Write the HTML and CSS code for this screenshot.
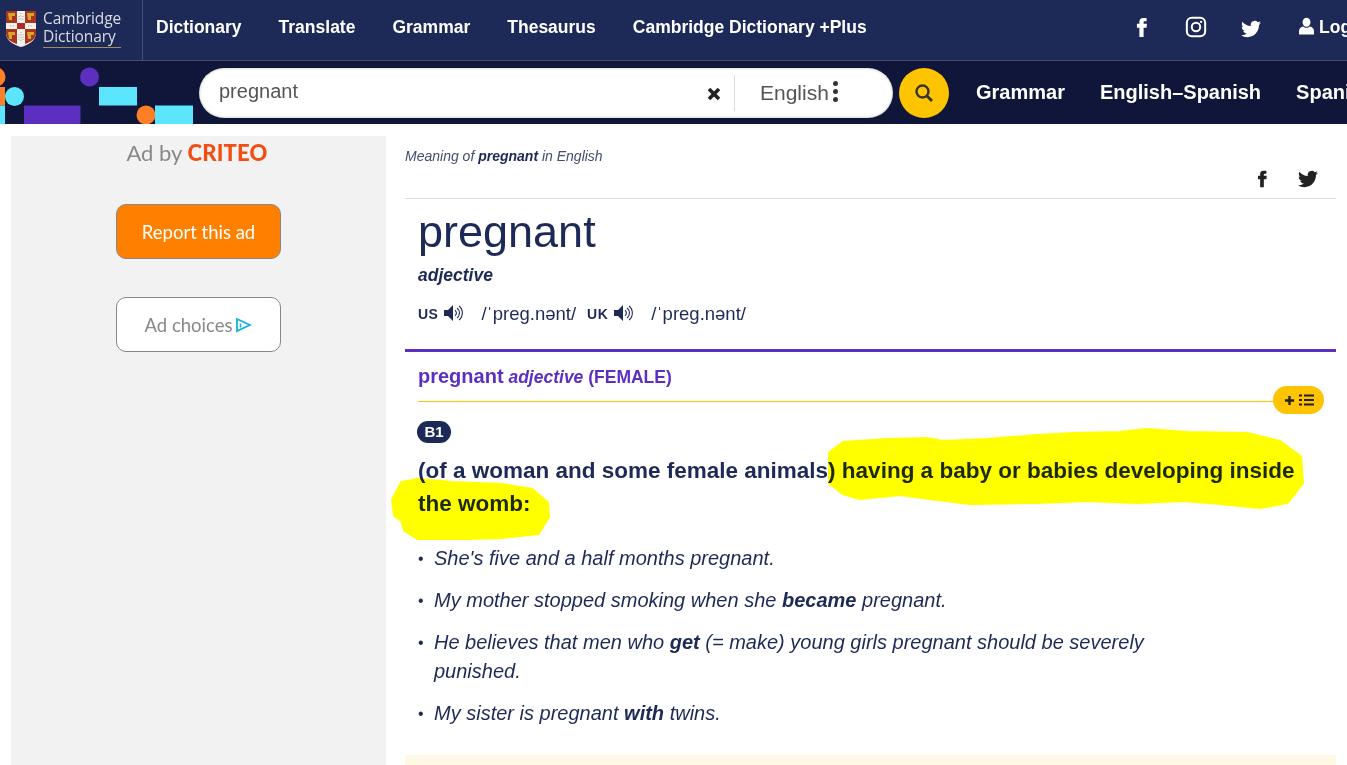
FILE: index.html
```html
<!DOCTYPE html>
<html lang="en">
<head>
<meta charset="utf-8">
<title>pregnant | Cambridge Dictionary</title>
<link rel="stylesheet" href="styles.css">
</head>
<body>
<svg class="defs" width="0" height="0" aria-hidden="true">
  <symbol id="i-fb" viewBox="0 0 24 24"><path d="M14.2 8.2h3.5l-.45 4h-3.05V22H9.8v-9.8H7.2v-4h2.6V5.8C9.8 3.2 11.3 2 13.7 2h3.6v3.6h-2.1c-.75 0-1 .35-1 1z"/></symbol>
  <symbol id="i-tw" viewBox="0 0 24 24"><path d="M23.95 4.57a10 10 0 0 1-2.82.78 4.96 4.96 0 0 0 2.16-2.73c-.95.56-2 .96-3.13 1.19a4.92 4.92 0 0 0-8.38 4.48C7.69 8.1 4.07 6.13 1.64 3.16a4.82 4.82 0 0 0-.67 2.48c0 1.7.87 3.21 2.19 4.09a4.9 4.9 0 0 1-2.23-.61v.06a4.92 4.92 0 0 0 3.95 4.82 5 5 0 0 1-2.21.09 4.94 4.94 0 0 0 4.6 3.42 9.87 9.87 0 0 1-6.1 2.1c-.39 0-.78-.02-1.17-.06a14 14 0 0 0 7.56 2.2c9.05 0 14-7.49 14-13.98 0-.21 0-.42-.02-.63A9.94 9.94 0 0 0 24 4.59z"/></symbol>
  <symbol id="i-spk" viewBox="0 0 20 18"><path d="M0 6h4l5-5v16l-5-5H0z" fill="currentColor"/><path d="M11 6.2a3.5 3.5 0 0 1 0 5.6M13 4a6.3 6.3 0 0 1 0 10M15 2a9 9 0 0 1 0 14" fill="none" stroke="currentColor" stroke-width="1.1"/></symbol>
</svg>

<header class="top">
  <a class="brand">
    <svg class="shield" viewBox="0 0 32 38">
      <path d="M1 1h30v22c0 8-8 12-15 14C9 35 1 31 1 23z" fill="#f3f1ec"/>
      <path d="M1 1h11v12H1zM20 1h11v12H20zM1 19h11v15C6 32 1 29 1 23zM20 19h11v4c0 6-5 9-11 11z" fill="#a8361f"/>
      <path d="M3 3h7v3H7v4H4zM22 3h7v3h-3v4h-3zM3 22h7v3H7v4H4zM22 22h7v3h-3v4h-3z" fill="#d7a52f"/>
      <path d="M12 13h8v6h-8z" fill="#b02a22"/>
      <path d="M16 3v8M14 6v5M18 6v5M5 16h4M23 16h4M16 22v10M14 24v6M18 24v6" stroke="#8a8a8a" stroke-width=".8" stroke-dasharray="1 1.6"/>
    </svg>
    <span class="brand-name">Cambridge<br>Dictionary</span>
  </a>
  <nav class="top-nav">
    <a>Dictionary</a><a>Translate</a><a>Grammar</a><a>Thesaurus</a><a>Cambridge Dictionary +Plus</a>
  </nav>
  <div class="top-tools">
    <svg class="ti ti-f"><use href="#i-fb"/></svg>
    <svg class="ti ti-ig" viewBox="0 0 24 24"><rect x="2" y="2" width="20" height="20" rx="5.5" fill="none" stroke="#fff" stroke-width="2.2"/><circle cx="12" cy="12" r="4.6" fill="none" stroke="#fff" stroke-width="2.2"/><circle cx="17.6" cy="6.4" r="1.3" fill="#fff"/></svg>
    <svg class="ti ti-t"><use href="#i-tw"/></svg>
    <svg class="ti ti-u" viewBox="0 0 16 18"><ellipse cx="8" cy="5" rx="4.2" ry="4.8" fill="#fff"/><path d="M0 18v-3.5C0 11.5 2 10 4.5 9.5c1 1 2 1.4 3.5 1.4s2.500-.4 3.500-1.400C14 10 16 11.500 16 14.500V18z" fill="#fff"/></svg>
    <span class="login">Log in</span>
  </div>
</header>

<div class="bar">
  <svg class="confetti" viewBox="0 0 199 63">
    <circle cx="-4" cy="16" r="9.500" fill="#ff7f27"/>
    <rect x="0" y="26" width="5" height="18.500" fill="#ff7f27"/>
    <rect x="0" y="44.500" width="5" height="18.500" fill="#5be5ff"/>
    <circle cx="14.500" cy="35.500" r="9.500" fill="#5be5ff"/>
    <rect x="24" y="44.500" width="56.500" height="18.500" fill="#5d2fc1"/>
    <circle cx="89.500" cy="16" r="9.500" fill="#5d2fc1"/>
    <rect x="99" y="26" width="38" height="18.500" fill="#5be5ff"/>
    <circle cx="146" cy="54" r="9.500" fill="#ff7f27"/>
    <rect x="155" y="44.500" width="38" height="18.500" fill="#5be5ff"/>
  </svg>
  <div class="search">
    <span class="search-q">pregnant</span>
    <svg class="clear" viewBox="0 0 14 14"><path d="M2 2l10 10M12 2L2 12" stroke="#222" stroke-width="3.600"/></svg>
    <span class="search-lang">English</span>
    <span class="dots"><i></i><i></i><i></i></span>
  </div>
  <button class="go" type="button" aria-label="Search">
    <svg viewBox="0 0 20 20"><circle cx="8.500" cy="8.500" r="6" fill="none" stroke="#333" stroke-width="2.400"/><path d="M13 13l5 5" stroke="#333" stroke-width="2.800"/></svg>
  </button>
  <nav class="sub-nav"><a>Grammar</a><a>English–Spanish</a><a>Spanish–English</a></nav>
</div>

<main class="main">
  <aside class="ads">
    <div class="adby">Ad by <b>CRITEO</b></div>
    <a class="adbtn adbtn-report">Report this ad</a>
    <a class="adbtn adbtn-choice">Ad choices
      <svg viewBox="0 0 17 16"><path d="M2 2l13 6-13 6z" fill="none" stroke="#12b4d6" stroke-width="1.800"/><path d="M5.500 6.500v4" stroke="#12b4d6" stroke-width="1.600"/></svg>
    </a>
  </aside>
  <article class="entry">
    <div class="crumb">
      <p class="meaning">Meaning of <b>pregnant</b> in English</p>
      <div class="share">
        <svg><use href="#i-fb"/></svg>
        <svg><use href="#i-tw"/></svg>
      </div>
    </div>
    <header class="head">
      <h1>pregnant</h1>
      <div class="pos">adjective</div>
      <div class="pron">
        <b>US</b><svg class="spk"><use href="#i-spk"/></svg><span class="ipa">/ˈpreɡ.nənt/</span>
        <b class="uk">UK</b><svg class="spk"><use href="#i-spk"/></svg><span class="ipa">/ˈpreɡ.nənt/</span>
      </div>
    </header>
    <section class="sense">
      <h2 class="sense-title"><span>pregnant</span> <i>adjective</i> (FEMALE)</h2>
      <div class="sense-rule">
        <span class="pill">
          <svg viewBox="0 0 12 12"><path d="M6 1v10M1 6h10" stroke="#222" stroke-width="2.600"/></svg>
          <svg viewBox="0 0 15 12"><path d="M0 1.500h3M5 1.500h10M0 6h3M5 6h10M0 10.500h3M5 10.500h10" stroke="#222" stroke-width="2"/></svg>
        </span>
      </div>
      <span class="level">B1</span>
      <p class="def">(of a woman and some female animals) having a baby or babies developing inside the womb:</p>
      <ul class="examples">
        <li>She's five and a half months pregnant.</li>
        <li>My mother stopped smoking when she <b>became</b> pregnant.</li>
        <li>He believes that men who <b>get</b> (= make) young girls pregnant should be severely punished.</li>
        <li>My sister is pregnant <b>with</b> twins.</li>
      </ul>
      <div class="extra"></div>
    </section>
  </article>
</main>

<svg class="marker" width="1347" height="765" aria-hidden="true">
  <polygon points="830,453 843,443 887,440 927,439 943,442 987,440 1037,436 1073,434 1120,433 1147,430 1187,433 1247,434 1280,442 1300,457 1302,483 1287,502 1260,507 1220,503 1183,500 1137,502 1087,500 1037,502 970,503 930,498 900,494 860,498 843,493 830,483"/>
  <polygon points="393,500 402,483 418,480 452,483 502,485 532,490 547,503 548,517 538,533 502,537 468,538 418,538 405,530 402,520 395,515"/>
</svg>
</body>
</html>
```

FILE: styles.css
```css
* { box-sizing: border-box; }
html, body { margin: 0; height: 765px; overflow: hidden; }
body { font-family: "Liberation Sans", Arial, sans-serif; background: #fff; color: #1d2a57; position: relative; width: 1347px; }
a { color: inherit; text-decoration: none; }
.defs { position: absolute; }

.top { height: 61px; background: #1d2a57; border-bottom: 1px solid #454f75; display: flex; align-items: stretch; color: #fff; white-space: nowrap; }
.brand { width: 143px; flex: none; border-right: 1px solid #454f75; display: flex; align-items: center; padding: 0 0 0 5px; gap: 6px; }
.shield { width: 32px; height: 38px; flex: none; margin-top: -2px; }
.brand-name { font-family: "Open Sans", sans-serif; font-size: 15.500px; line-height: 18px; color: #d9dbe3; border-bottom: 1px solid #a58a5c; padding-bottom: 2px; margin-top: -4px; letter-spacing: -.1px; }
.top-nav { display: flex; gap: 37px; padding-left: 13px; align-items: center; font-weight: 700; font-size: 17.500px; margin-top: -6px; }
.top-tools { margin-left: auto; display: flex; align-items: center; margin-top: -6px; position: relative; width: 217px; flex: none; }
.ti { fill: #fff; flex: none; }
.ti-f { width: 23px; height: 23px; margin-left: 0; }
.ti-ig { width: 22px; height: 22px; margin-left: 32px; }
.ti-t { width: 20px; height: 20px; margin-left: 34px; margin-top: 3px; }
.ti-u { width: 15px; height: 18px; margin-left: 38px; margin-top: -2px; }
.login { font-weight: 700; font-size: 17.500px; margin-left: 5px; }

.bar { height: 63px; background: #0f1639; display: flex; align-items: center; color: #fff; white-space: nowrap; }
.confetti { width: 199px; height: 63px; flex: none; overflow: hidden; }
.search { width: 694px; height: 50px; background: #fff; border-radius: 25px; margin-top: 0; flex: none; display: flex; align-items: center; padding-left: 20px; color: #555; font-size: 20px; box-shadow: inset 0 0 3px rgba(0,0,0,.3); }
.search-q { width: 488px; margin-top: -2px; }
.clear { width: 14px; height: 14px; margin-top: 3px; }
.search-lang { border-left: 1px solid #ddd; height: 36px; line-height: 36px; margin-left: 13px; padding-left: 25px; font-size: 21px; width: 99px; }
.dots { display: flex; flex-direction: column; gap: 3px; margin-top: -2px; }
.dots i { width: 5px; height: 5px; border-radius: 50%; background: #333; display: block; }
.go { width: 50px; height: 50px; border-radius: 50%; background: #fec400; border: 0; padding: 0; margin-left: 6px; flex: none; display: flex; align-items: center; justify-content: center; }
.go svg { width: 20px; height: 20px; }
.sub-nav { display: flex; gap: 35px; margin-left: 27px; font-weight: 700; font-size: 20px; }

.main { display: flex; padding: 12px 11px 0; gap: 19px; height: 641px; overflow: hidden; }
.ads { width: 375px; flex: none; background: #f2f2f2; display: flex; flex-direction: column; align-items: center; font-family: Lato, sans-serif; }
.adby { font-size: 22px; color: #888; height: 68px; padding-top: 3px; font-weight: 400; margin-right: 3px; }
.adby b { color: #f04e12; font-weight: 900; letter-spacing: .2px; }
.adbtn { width: 165px; height: 55px; border-radius: 10px; border: 1px solid #888; display: flex; align-items: center; justify-content: center; font-size: 18.500px; gap: 3px; }
.adbtn-report { background: #ff8000; color: #fff; margin-bottom: 38px; }
.adbtn-choice { background: #fff; color: #888; }
.adbtn-choice svg { width: 17px; height: 16px; }

.entry { width: 931px; flex: none; }
.crumb { height: 63px; border-bottom: 1px solid #ddd; position: relative; padding-top: 11px; }
.meaning { margin: 0; font-size: 14px; line-height: 18px; font-style: italic; color: #454c6f; }
.meaning b { color: #1d2a57; }
.share { position: absolute; right: 18px; top: 33px; display: flex; gap: 26px; }
.share svg { width: 20px; height: 20px; fill: #222; }
.head { padding: 7px 0 0 13px; height: 153px; border-bottom: 3px solid #5d2fc1; }
h1 { margin: 0; font-size: 45px; font-weight: 400; line-height: 52px; }
.pos { font-weight: 700; font-style: italic; font-size: 17.500px; line-height: 22px; margin-top: 6px; }
.pron { display: flex; align-items: center; margin-top: 16px; font-size: 18px; color: #1d2a57; height: 24px; }
.pron b { font-size: 14px; letter-spacing: .5px; }
.spk { width: 20px; height: 18px; color: #1d2a57; margin-left: 6px; margin-top: -3px; }
.ipa { margin-left: 17px; font-size: 18.500px; font-family: "Liberation Sans", "DejaVu Sans", sans-serif; white-space: nowrap; }
.uk { margin-left: 11px; }

.sense { padding: 0 0 0 13px; position: relative; }
.sense-title { margin: 0; font-size: 17.500px; line-height: 22px; padding-top: 13px; color: #5d2fc1; font-weight: 700; height: 49px; }
.sense-title span { font-size: 20px; }
.sense-rule { height: 1px; background: #fec400; margin-right: 12px; margin-bottom: 19px; position: relative; }
.pill { position: absolute; right: 0; top: -15px; width: 51px; height: 28px; border-radius: 14px; background: #fec400; display: flex; align-items: center; justify-content: center; gap: 4px; }
.pill svg:first-child { width: 11px; height: 11px; }
.pill svg:last-child { width: 15px; height: 12px; }
.level { display: block; width: 34px; height: 22px; border-radius: 11px; background: #1d2a57; color: #fff; font-size: 15px; font-weight: 700; line-height: 22px; text-align: center; margin-left: -1px; }
.def { margin: 11px 0 0; font-size: 22.500px; font-weight: 700; line-height: 33px; width: 890px; }
.examples { list-style: none; margin: 24px 0 0; padding: 0; font-style: italic; font-size: 20px; line-height: 29px; width: 790px; }
.examples li { position: relative; padding-left: 16px; margin-bottom: 13px; }
.examples li::before { content: "•"; font-style: normal; position: absolute; left: 0; font-size: 16px; }
.extra { position: absolute; left: 0; right: 0; top: 403px; height: 60px; background: #fff8e5; }

.marker { position: absolute; left: 0; top: 0; pointer-events: none; mix-blend-mode: multiply; }
.marker polygon { fill: #ff0; stroke: #ff0; stroke-width: 4; stroke-linejoin: round; }
```
